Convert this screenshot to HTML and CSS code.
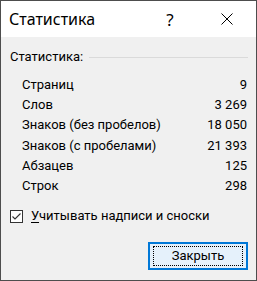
FILE: index.html
```html
<!DOCTYPE html>
<html lang="ru">
<head>
    <meta charset="UTF-8">
    <meta name="viewport" content="width=device-width, initial-scale=1.0">
    <title>Статистика</title>

    <link rel="stylesheet" href="styles.css">
</head>
<body>

    <div class="window">
        <div class="titlebar">
            <div class="title">Статистика</div>
            <div class="help">?</div>
            <div class="close">
                <svg width="12" height="12" viewBox="0 0 12 12">
                    <path d="M0.5 0.5 L11.5 11.5 M11.5 0.5 L0.5 11.5" stroke="#000" stroke-width="1" fill="none"/>
                </svg>
            </div>
        </div>

        <div class="content">
            <div class="group">
                <span>Статистика:</span>
                <div class="line"></div>
            </div>

            <div class="stats">
                <div class="row"><span>Страниц</span><span>9</span></div>
                <div class="row"><span>Слов</span><span>3 269</span></div>
                <div class="row"><span>Знаков (без пробелов)</span><span>18 050</span></div>
                <div class="row"><span>Знаков (с пробелами)</span><span>21 393</span></div>
                <div class="row"><span>Абзацев</span><span>125</span></div>
                <div class="row"><span>Строк</span><span>298</span></div>
            </div>

            <label class="check">
                <span class="box">
                    <svg width="11" height="11" viewBox="0 0 11 11">
                        <path d="M1.5 5.5 L4 8 L9.5 2.5" stroke="#333" stroke-width="1.1" fill="none"/>
                    </svg>
                </span>
                <span><u>У</u>читывать надписи и сноски</span>
            </label>

            <div class="actions">
                <button class="btn" type="button"><span class="focus">Закрыть</span></button>
            </div>
        </div>
    </div>

</body>
</html>
```

FILE: styles.css
```css
body {
    margin: 0;
    font-family: Roboto, "Noto Sans", sans-serif;
    color: #000;
}

.window {
    width: 257px;
    height: 281px;
    box-sizing: border-box;
    border: 1px solid #4d4d4d;
    background-color: #f0f0f0;
    display: flex;
    flex-direction: column;
}

.titlebar {
    height: 36px;
    background-color: #fff;
    display: flex;
    align-items: center;
    font-family: "Noto Sans", sans-serif;
}

.title {
    flex: 1;
    padding-left: 8px;
    font-size: 16px;
}

.help {
    width: 56px;
    text-align: center;
    font-size: 17px;
}

.close {
    width: 58px;
    display: flex;
    justify-content: center;
}

.close svg {
    display: block;
}

.content {
    flex: 1;
    padding: 10px 8px 0 9px;
    font-size: 13px;
    line-height: 20px;
}

.group {
    display: flex;
    align-items: center;
}

.line {
    flex: 1;
    height: 1px;
    margin-left: 6px;
    background-color: #dadada;
}

.stats {
    margin-top: 7.5px;
    padding-left: 12px;
    padding-right: 1px;
}

.row {
    display: flex;
    justify-content: space-between;
    height: 20.4px;
}

.check {
    margin-top: 9.5px;
    display: flex;
    align-items: center;
    gap: 8px;
}

.check u {
    text-decoration-thickness: 1px;
    text-underline-offset: 2px;
}

.box {
    width: 13px;
    height: 13px;
    box-sizing: border-box;
    border: 1px solid #333;
    background-color: #fff;
    display: flex;
    align-items: center;
    justify-content: center;
}

.actions {
    margin-top: 15.5px;
    display: flex;
    justify-content: flex-end;
}

.btn {
    width: 100px;
    height: 28px;
    box-sizing: border-box;
    border: 2px solid #0078d7;
    background-color: #e5f1fb;
    padding: 2px 3px;
    font-family: inherit;
    font-size: 13px;
    color: #000;
    display: flex;
}

.focus {
    flex: 1;
    border: 1px dotted #000;
    display: flex;
    align-items: center;
    justify-content: center;
    line-height: 18px;
}
```
